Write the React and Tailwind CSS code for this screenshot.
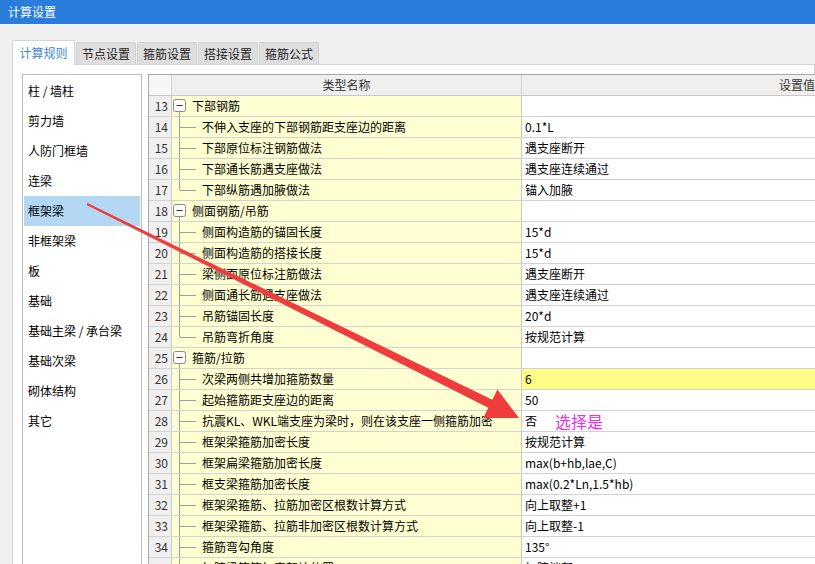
import React from 'react';

const sideItems = [
  '柱 / 墙柱', '剪力墙', '人防门框墙', '连梁', '框架梁', '非框架梁',
  '板', '基础', '基础主梁 / 承台梁', '基础次梁', '砌体结构', '其它'
];

const tabs = ['计算规则', '节点设置', '箍筋设置', '搭接设置', '箍筋公式'];

const rows = [
  { n: 13, label: '下部钢筋', group: true },
  { n: 14, label: '不伸入支座的下部钢筋距支座边的距离', value: '0.1*L' },
  { n: 15, label: '下部原位标注钢筋做法', value: '遇支座断开' },
  { n: 16, label: '下部通长筋遇支座做法', value: '遇支座连续通过' },
  { n: 17, label: '下部纵筋遇加腋做法', value: '锚入加腋', last: true },
  { n: 18, label: '侧面钢筋/吊筋', group: true },
  { n: 19, label: '侧面构造筋的锚固长度', value: '15*d' },
  { n: 20, label: '侧面构造筋的搭接长度', value: '15*d' },
  { n: 21, label: '梁侧面原位标注筋做法', value: '遇支座断开' },
  { n: 22, label: '侧面通长筋遇支座做法', value: '遇支座连续通过' },
  { n: 23, label: '吊筋锚固长度', value: '20*d' },
  { n: 24, label: '吊筋弯折角度', value: '按规范计算', last: true },
  { n: 25, label: '箍筋/拉筋', group: true },
  { n: 26, label: '次梁两侧共增加箍筋数量', value: '6', hl: true },
  { n: 27, label: '起始箍筋距支座边的距离', value: '50' },
  { n: 28, label: '抗震KL、WKL端支座为梁时，则在该支座一侧箍筋加密', value: '否', note: '选择是' },
  { n: 29, label: '框架梁箍筋加密长度', value: '按规范计算' },
  { n: 30, label: '框架扁梁箍筋加密长度', value: 'max(b+hb,lae,C)' },
  { n: 31, label: '框支梁箍筋加密长度', value: 'max(0.2*Ln,1.5*hb)' },
  { n: 32, label: '框架梁箍筋、拉筋加密区根数计算方式', value: '向上取整+1' },
  { n: 33, label: '框架梁箍筋、拉筋非加密区根数计算方式', value: '向上取整-1' },
  { n: 34, label: '箍筋弯勾角度', value: '135°' },
  { n: 35, label: '加腋梁箍筋加密起始位置', value: '加腋端部' },
];

// tree guide drawn in front of each name cell
const TreeGuide = ({ group, last }) => {
  if (group) {
    return (
      <svg width="20" height="20" className="shrink-0">
        <rect x="1.5" y="3.5" width="12" height="12" rx="2" fill="#fafafa" stroke="#8a8a8a" />
        <line x1="4.5" y1="9.5" x2="10.5" y2="9.5" stroke="#333" />
        <line x1="7.5" y1="16" x2="7.5" y2="20" stroke="#a0a0a0" />
      </svg>
    );
  }
  return (
    <svg width="30" height="20" className="shrink-0">
      <line x1="7.5" y1="0" x2="7.5" y2={last ? 10 : 20} stroke="#a0a0a0" />
      <line x1="8" y1="10.5" x2="24" y2="10.5" stroke="#a0a0a0" />
    </svg>
  );
};

const Row = ({ row }) => (
  <div className="flex h-[21px] border-b border-[#d2d2d2]">
    <div className="w-[23px] shrink-0 bg-[#f0f0f0] border-r border-[#c8c8c8] text-right pr-[3px] leading-[20px] text-[#333]">
      {row.n}
    </div>
    <div className="w-[350px] shrink-0 bg-[#ffffd2] border-r border-[#c8c8c8] flex items-center whitespace-nowrap overflow-hidden">
      <TreeGuide group={row.group} last={row.last} />
      <span className="leading-[20px] text-black">{row.label}</span>
    </div>
    <div className={`w-[550px] shrink-0 pl-[3px] leading-[20px] flex items-center text-black ${row.hl ? 'bg-[#ffff88]' : 'bg-white'}`}>
      {row.value}
      {row.note && (
        <span className="ml-[18px] text-[16px] leading-[20px] text-[#ee2bee]">{row.note}</span>
      )}
    </div>
  </div>
);

export default function App() {
  return (
    <div className="relative w-[815px] h-[564px] overflow-hidden bg-[#f0f0f0] text-[12px] font-['Noto_Sans_CJK_SC',sans-serif]">
      {/* title bar */}
      <div className="h-6 bg-[#2b7ddc] text-white flex items-center pl-2 leading-none">计算设置</div>

      <div className="pl-3 pt-4">
        {/* tab strip */}
        <div className="flex items-end h-6 gap-px">
          {tabs.map((t, i) =>
            i === 0 ? (
              <div
                key={t}
                className="relative z-10 -mb-px h-[25px] w-[63px] bg-white border border-b-0 border-[#d4d4d4] rounded-t-[2px] flex items-center justify-center text-[#3b87d8]"
              >
                {t}
              </div>
            ) : (
              <div
                key={t}
                className="h-[22px] w-[60px] bg-[#dedede] border border-b-0 border-[#d0d0d0] rounded-t-[2px] flex items-center justify-center text-[#222]"
              >
                {t}
              </div>
            )
          )}
        </div>

        {/* tab page */}
        <div className="bg-white border border-[#d4d4d4] h-[520px] flex gap-[6px] pl-[9px] pt-[9px]">
          {/* category list */}
          <div className="w-[120px] shrink-0 border border-[#bcbcbc] bg-white p-px">
            {sideItems.map((s, i) => (
              <div
                key={s}
                className={`h-[30px] pl-[4px] flex items-center whitespace-nowrap text-black ${i === 4 ? 'bg-[#b4d8f4]' : ''}`}
              >
                {s}
              </div>
            ))}
          </div>

          {/* property grid */}
          <div className="w-[930px] shrink-0 border-l border-t border-[#a8a8a8] bg-white">
            <div className="flex h-[21px] border-b border-[#c8c8c8] text-[#333]">
              <div className="w-[23px] shrink-0 bg-[#f6f6f6] border-r border-[#d4d4d4]" />
              <div className="w-[350px] shrink-0 bg-[#efefef] border-r border-[#d4d4d4] flex items-center justify-center">类型名称</div>
              <div className="w-[550px] shrink-0 bg-[#efefef] flex items-center justify-center">设置值</div>
            </div>
            {rows.map((r) => (
              <Row key={r.n} row={r} />
            ))}
          </div>
        </div>
      </div>

      {/* red annotation arrow */}
      <svg className="absolute inset-0 pointer-events-none" width="815" height="564">
        <polygon
          points="87.4,203.1 492.3,399.8 497.4,389.5 519,418 483.2,418.1 488.3,407.8 86.6,204.9"
          fill="#f03c3c"
        />
      </svg>
    </div>
  );
}
